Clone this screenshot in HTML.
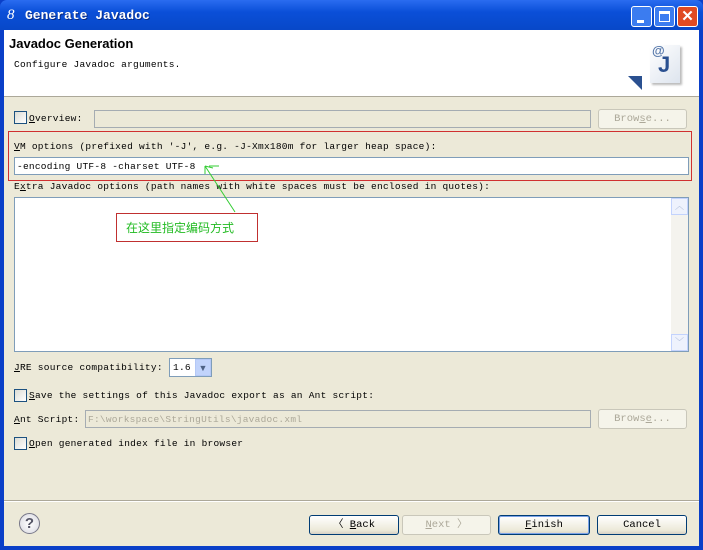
<!DOCTYPE html>
<html><head><meta charset="utf-8"><style>
*{box-sizing:border-box;margin:0;padding:0}
body{width:703px;height:550px;overflow:hidden;background:#0a3fc8;font-family:"Liberation Serif","Noto Serif CJK SC",serif;font-size:11px;color:#000;position:relative}
.a{position:absolute}
#title{left:0;top:0;width:703px;height:30px;background:linear-gradient(#2a6cf0,#0a4fd8 40%,#0848c8);border-radius:7px 7px 0 0}
#title span{position:absolute;left:25px;top:8px;color:#fff;font-family:"Liberation Mono",monospace;font-weight:bold;font-size:13px;text-shadow:1px 1px #0a2a80}
.tb{top:6px;width:21px;height:21px;border:1px solid #fff;border-radius:3px;background:#3b7cf0}
#main{left:4px;top:30px;width:695px;height:516px;background:#ece9d8}
#hdr{left:4px;top:30px;width:695px;height:67px;background:#fff;border-bottom:1px solid #aca899}
.mono{font-family:"Liberation Mono",monospace;font-size:9.5px;letter-spacing:0.25px}
.cb{width:13px;height:13px;border:1px solid #1c5180;background:linear-gradient(135deg,#dcdcd5,#fff)}
.tf{background:#fff;border:1px solid #7f9db9}
.dis{background:#ece9d8;border:1px solid #a5acb2}
.btn{height:20px;border:1px solid #003c74;border-radius:3px;background:linear-gradient(#fff,#ece9d8 80%,#d6d0c5);text-align:center;line-height:18px;font-family:"Liberation Mono",monospace;font-size:10.5px}
.btnd{border-color:#c9c7ba;color:#aca899;background:#f5f4ea}
</style></head><body>
<div class="a" id="title"><span>Generate Javadoc</span>
<div class="a" style="left:7px;top:7px;color:#fff;font-style:italic;font-size:15px">8</div>
<div class="a tb" style="left:631px;background:#3b7cf0"><div class="a" style="left:5px;top:13px;width:7px;height:3px;background:#fff"></div></div>
<div class="a tb" style="left:654px"><div class="a" style="left:4px;top:4px;width:11px;height:11px;border:1px solid #fff;border-top-width:3px"></div></div>
<div class="a tb" style="left:677px;background:#e04a22;color:#fff;text-align:center;font:bold 15px 'Liberation Sans';line-height:19px">✕</div>
</div>
<div class="a" id="main"></div>
<div class="a" id="hdr"></div>
<div class="a" style="left:9px;top:36px;font:bold 13px 'Liberation Sans',sans-serif">Javadoc Generation</div>
<div class="a mono" style="left:14px;top:59px">Configure Javadoc arguments.</div>
<div class="a" style="left:650px;top:45px;width:30px;height:38px;background:linear-gradient(135deg,#fff,#dde4ee);box-shadow:2px 2px 2px #bbb"></div>
<div class="a" style="left:652px;top:43px;color:#5577aa;font:bold 13px 'Liberation Sans'">@</div>
<div class="a" style="left:658px;top:52px;color:#2a5090;font:bold 22px 'Liberation Sans'">J</div>
<div class="a" style="left:628px;top:76px;width:0;height:0;border-left:14px solid transparent;border-top:14px solid #2a5090"></div>

<div class="a cb" style="left:14px;top:111px"></div>
<div class="a mono" style="left:29px;top:113px"><u>O</u>verview:</div>
<div class="a dis" style="left:94px;top:110px;width:497px;height:18px"></div>
<div class="a btn btnd" style="left:598px;top:109px;width:89px">Brow<u>s</u>e...</div>

<div class="a" style="left:8px;top:131px;width:684px;height:50px;border:1px solid #d03030"></div>
<div class="a mono" style="left:14px;top:141px"><u>V</u>M options (prefixed with '-J', e.g. -J-Xmx180m for larger heap space):</div>
<div class="a tf mono" style="left:14px;top:157px;width:675px;height:18px;padding:3px 2px">-encoding UTF-8 -charset UTF-8</div>
<div class="a mono" style="left:14px;top:181px">E<u>x</u>tra Javadoc options (path names with white spaces must be enclosed in quotes):</div>
<div class="a tf" style="left:14px;top:197px;width:675px;height:155px"></div>
<div class="a" style="left:671px;top:198px;width:17px;height:153px;background:#f4f3ee"></div>
<div class="a" style="left:671px;top:198px;width:17px;height:17px;border:1px solid #c3d3fd;background:#eef2fd;color:#a0b0d0;font-size:9px;text-align:center">︿</div>
<div class="a" style="left:671px;top:334px;width:17px;height:17px;border:1px solid #c3d3fd;background:#eef2fd;color:#a0b0d0;font-size:9px;text-align:center">﹀</div>
<div class="a" style="left:116px;top:213px;width:142px;height:29px;border:1px solid #c03030;background:#fff"></div>
<div class="a" style="left:126px;top:219px;color:#22bb22;font:12px 'Noto Sans CJK SC',sans-serif">在这里指定编码方式</div>
<svg class="a" style="left:195px;top:160px" width="50" height="55"><path d="M10 6 L40 52 M10 6 L10 14 M10 6 L18 8 M14 6 L24 6" stroke="#33cc33" fill="none"/></svg>

<div class="a mono" style="left:14px;top:362px"><u>J</u>RE source compatibility:</div>
<div class="a tf mono" style="left:169px;top:358px;width:43px;height:19px;padding:3px 3px">1.6</div>
<div class="a" style="left:195px;top:359px;width:16px;height:17px;background:#c1d3fb;border:1px solid #b4c8f6;color:#4d6185;font-size:9px;text-align:center;line-height:16px">▼</div>
<div class="a cb" style="left:14px;top:389px"></div>
<div class="a mono" style="left:29px;top:390px"><u>S</u>ave the settings of this Javadoc export as an Ant script:</div>
<div class="a mono" style="left:14px;top:414px"><u>A</u>nt Script:</div>
<div class="a dis mono" style="left:85px;top:410px;width:506px;height:18px;padding:3px 2px;color:#aca899">F:\workspace\StringUtils\javadoc.xml</div>
<div class="a btn btnd" style="left:598px;top:409px;width:89px">Brows<u>e</u>...</div>
<div class="a cb" style="left:14px;top:437px"></div>
<div class="a mono" style="left:29px;top:438px"><u>O</u>pen generated index file in browser</div>

<div class="a" style="left:4px;top:500px;width:695px;border-top:1px solid #aca899;border-bottom:1px solid #fff"></div>
<div class="a" style="left:19px;top:513px;width:21px;height:21px;border-radius:50%;border:1px solid #778;background:radial-gradient(#fff,#d8d8e0);text-align:center;font:bold 15px 'Liberation Sans';line-height:19px;color:#556">?</div>
<div class="a btn" style="left:309px;top:515px;width:90px">〈 <u>B</u>ack</div>
<div class="a btn btnd" style="left:402px;top:515px;width:89px"><u>N</u>ext 〉</div>
<div class="a btn" style="left:498px;top:515px;width:92px;border-color:#003c74;box-shadow:inset 0 0 0 1px #7ba2e7"><u>F</u>inish</div>
<div class="a btn" style="left:597px;top:515px;width:90px">Cancel</div>
</body></html>
